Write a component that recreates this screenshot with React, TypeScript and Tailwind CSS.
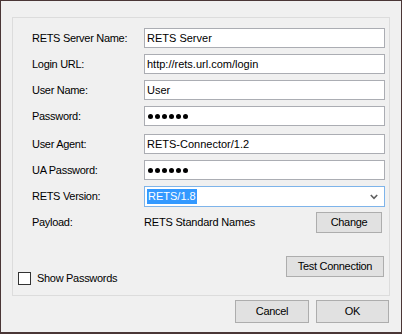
import React from "react";

const font = "font-['Liberation_Sans',Arial,sans-serif]";

function Dots() {
  return (
    <div className="flex items-center gap-[2px] pl-[3px]">
      {[0, 1, 2, 3, 4, 5].map((i) => (
        <span key={i} className="block h-[5px] w-[5px] rounded-full bg-black" />
      ))}
    </div>
  );
}

function Field({ label, children, className = "" }: { label: string; children: React.ReactNode; className?: string }) {
  return (
    <div className={`ml-[19px] flex h-[20px] w-[353px] items-center ${className}`}>
      <span className="w-[112px] shrink-0 tracking-[-0.3px]">{label}</span>
      <div className="flex h-full w-[241px] items-center border border-[#abadb3] bg-white">{children}</div>
    </div>
  );
}

function Text({ value }: { value: string }) {
  return <span className="pl-[2px] leading-none">{value}</span>;
}

function Btn({ label, className = "" }: { label: string; className?: string }) {
  return (
    <button className={`flex items-center justify-center border border-[#adadad] bg-[#e1e1e1] tracking-[-0.3px] text-black ${className}`}>
      {label}
    </button>
  );
}

export default function App() {
  return (
    <div className={`${font} h-[334px] w-[402px] border border-b-2 border-[#4a3636] bg-[#f0f0f0] text-[11px] text-black`}>
      <div className="ml-[11px] mt-[16px] flex h-[279px] w-[378px] flex-col border border-[#dcdcdc] pt-[10px]">
        <Field label="RETS Server Name:"><Text value="RETS Server" /></Field>
        <Field label="Login URL:" className="mt-[6px]"><Text value="http://rets.url.com/login" /></Field>
        <Field label="User Name:" className="mt-[6px]"><Text value="User" /></Field>
        <Field label="Password:" className="mt-[6px]"><Dots /></Field>
        <Field label="User Agent:" className="mt-[8px]"><Text value="RETS-Connector/1.2" /></Field>
        <Field label="UA Password:" className="mt-[6px]"><Dots /></Field>

        <div className="ml-[19px] mt-[6px] flex h-[21px] w-[353px] items-center">
          <span className="w-[112px] shrink-0 tracking-[-0.3px]">RETS Version:</span>
          <div className="flex h-full w-[241px] items-center border border-[#7eb4ea] bg-white pl-[2px] pr-[6px]">
            <span className="bg-[#3399ff] px-[1px] leading-[15px] text-white">RETS/1.8</span>
            <svg className="ml-auto" width="8" height="6" viewBox="0 0 8 6">
              <path d="M0.8 1 L4 4.4 L7.2 1" fill="none" stroke="#606060" strokeWidth="1.6" />
            </svg>
          </div>
        </div>

        <div className="ml-[19px] mt-[5px] flex h-[21px] w-[353px] items-center">
          <span className="w-[112px] shrink-0 tracking-[-0.3px]">Payload:</span>
          <span className="tracking-[-0.2px]">RETS Standard Names</span>
          <Btn label="Change" className="ml-auto mr-[3px] h-[21px] w-[66px]" />
        </div>

        <div className="mt-[23px] flex items-start justify-between">
          <label className="ml-[5px] mt-[14px] flex items-center gap-[6px]">
            <span className="block h-[13px] w-[13px] border border-[#333333] bg-white" />
            <span className="tracking-[-0.3px]">Show Passwords</span>
          </label>
          <Btn label="Test Connection" className="mr-[5px] h-[21px] w-[98px]" />
        </div>
      </div>

      <div className="mt-[4px] flex justify-end gap-[7px] pr-[12px]">
        <Btn label="Cancel" className="h-[23px] w-[74px]" />
        <Btn label="OK" className="h-[23px] w-[73px]" />
      </div>
    </div>
  );
}
